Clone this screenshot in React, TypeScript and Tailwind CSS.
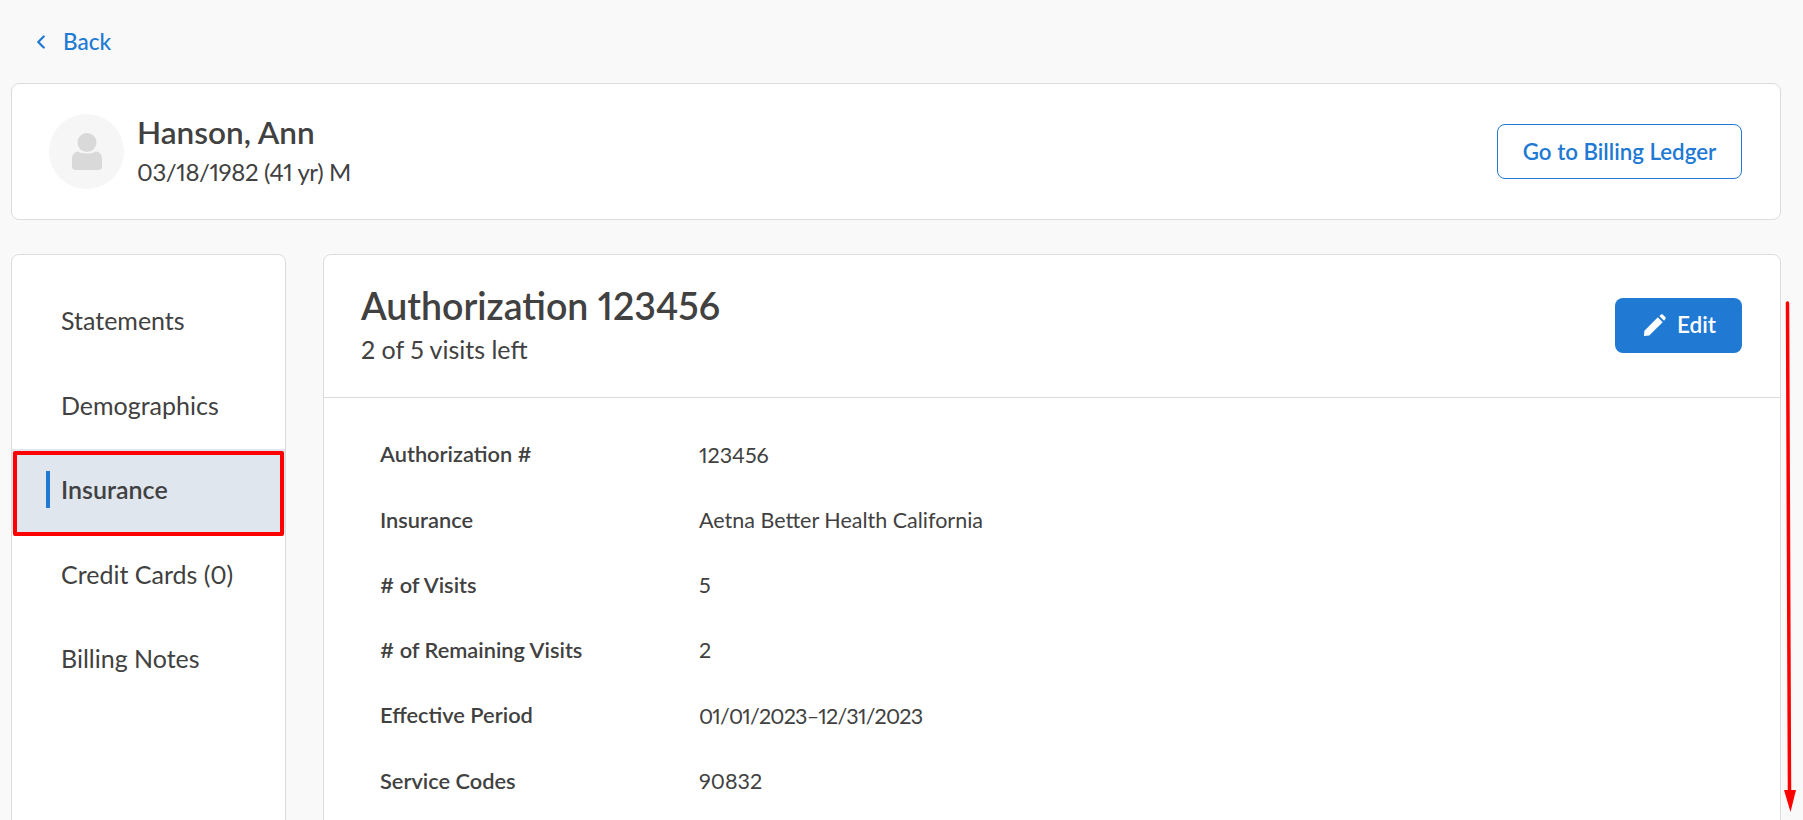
import React from 'react';
import { ChevronLeft } from 'lucide-react';

const navItems = [
  { label: 'Statements', row: 'h-[85px] pl-[49px]' },
  { label: 'Demographics', row: 'h-[85px] pl-[49px]' },
  { label: 'Insurance', row: 'mt-[1px] h-[84px] bg-[#e0e6ee] pb-[3px] pl-[34px] font-semibold', active: true },
  { label: 'Credit Cards (0)', row: 'h-[83px] pl-[49px]' },
  { label: 'Billing Notes', row: 'h-[85px] pl-[49px]' },
];

const details = [
  { label: 'Authorization #', value: '123456' },
  { label: 'Insurance', value: 'Aetna Better Health California' },
  { label: '# of Visits', value: '5' },
  { label: '# of Remaining Visits', value: '2' },
  { label: 'Effective Period', value: '01/01/2023–12/31/2023', tight: true },
  { label: 'Service Codes', value: '90832' },
];

export default function App() {
  return (
    <div className="relative h-screen overflow-hidden bg-[#f9f9f9] pl-[11px] pr-[22px] font-['Lato',sans-serif] text-[#414141] proportional-nums">
      {/* Back link */}
      <div className="flex h-[83px] items-center pl-[19px] text-[#2079d2]">
        <ChevronLeft className="h-[22px] w-[22px]" strokeWidth={2.5} />
        <span className="ml-[11px] text-[22.5px] font-medium">Back</span>
      </div>

      {/* Patient header */}
      <div className="flex h-[137px] items-center justify-between rounded-lg border border-[#dcdcdc] bg-white pl-[37px] pr-[38px]">
        <div className="flex items-center">
          <div className="flex h-[75px] w-[75px] items-center justify-center rounded-full bg-[#f6f6f6]">
            <svg width="32" height="38" viewBox="0 0 32 38" fill="#d9d9d9">
              <circle cx="16" cy="9.5" r="9.5" />
              <path d="M7 18.5 C10 21 22 21 25 18.5 C29 19 31 22 31 26 L31 33 C31 36 29.5 37 27 37 L5 37 C2.5 37 1 36 1 33 L1 26 C1 22 3 19 7 18.5 Z" />
            </svg>
          </div>
          <div className="ml-[13px] -mt-[3px]">
            <div className="text-[31.5px] font-semibold leading-[36px]">Hanson, Ann</div>
            <div className="mt-[7px] text-[24px] leading-[30px] tracking-[-0.4px]">03/18/1982 (41 yr) M</div>
          </div>
        </div>
        <button className="flex h-[55px] w-[245px] items-center justify-center rounded-lg border border-[#2079d2] bg-white text-[22.3px] font-semibold text-[#2079d2]">
          Go to Billing Ledger
        </button>
      </div>

      <div className="mt-[34px] flex gap-[37px]">
        {/* Side navigation */}
        <div className="h-[700px] w-[275px] shrink-0 rounded-lg border border-[#dcdcdc] bg-white pt-[23px]">
          {navItems.map((item) => (
            <div key={item.label} className={`flex items-center text-[25px] ${item.row}`}>
              {item.active && <span className="mr-[11px] h-[37px] w-[4px] bg-[#2079d2]" />}
              {item.label}
            </div>
          ))}
        </div>

        {/* Authorization details */}
        <div className="h-[700px] flex-1 rounded-lg border border-[#dcdcdc] bg-white">
          <div className="flex h-[143px] items-center justify-between border-b border-[#dcdcdc] pl-[37px] pr-[38px]">
            <div className="-mt-[5px]">
              <h1 className="text-[37.5px] font-semibold leading-[46px]">Authorization 123456</h1>
              <div className="mt-[5px] text-[25px] leading-[30px]">2 of 5 visits left</div>
            </div>
            <button className="-mt-[2px] flex h-[55px] w-[127px] items-center justify-center gap-[11px] rounded-lg bg-[#2079d2] pl-[2px] text-[22.5px] font-semibold text-white">
              <svg width="23" height="23" viewBox="0 0 24 24" fill="#ffffff">
                <path d="M1 23 L1.5 17.5 L15.5 3.5 L20.5 8.5 L6.5 22.5 Z" />
                <path d="M17 2 L19 0.5 C19.5 0.2 20 0.2 20.5 0.5 L23.5 3.5 C23.8 4 23.8 4.5 23.5 5 L22 7 Z" />
              </svg>
              Edit
            </button>
          </div>
          <div className="pl-[56px] pt-[24px]">
            {details.map((row) => (
              <div key={row.label} className="flex h-[65.3px] items-center">
                <span className="w-[319px] text-[21.8px] font-semibold">{row.label}</span>
                <span className={row.tight ? 'text-[21.5px] tracking-[-0.8px]' : 'text-[21.5px]'}>{row.value}</span>
              </div>
            ))}
          </div>
        </div>
      </div>

      {/* Red annotations drawn over the screenshot */}
      <div className="absolute left-[13px] top-[451px] h-[85px] w-[271px] rounded-[2px] border-[4px] border-[#ff0000]" />
      <svg className="absolute left-[1780px] top-[298px]" width="20" height="516" viewBox="0 0 20 516" fill="none">
        <path d="M7.5 5 L9.5 495" stroke="#ff0000" strokeWidth="3.5" strokeLinecap="round" />
        <path d="M4 492 L16 492 L10.5 514 Z" fill="#ff0000" />
      </svg>
    </div>
  );
}
